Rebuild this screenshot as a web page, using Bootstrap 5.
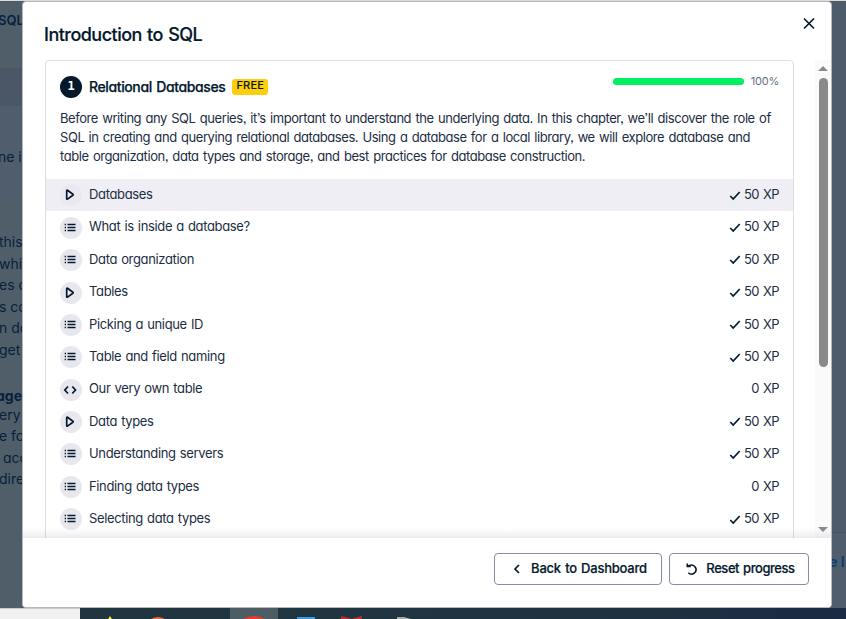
<!DOCTYPE html>
<html lang="en">
<head>
<meta charset="utf-8">
<meta name="viewport" content="width=device-width, initial-scale=1">
<title>Introduction to SQL</title>
<link href="https://cdn.jsdelivr.net/npm/bootstrap@5.3.0/dist/css/bootstrap.min.css" rel="stylesheet">
<style>
  body{height:619px;overflow:hidden;background:#505e6a;color:#05192d;font-family:Inter,"Liberation Sans",sans-serif;font-feature-settings:"cv11","ss03";font-size:13px;line-height:19px}
  svg{display:block;fill:none;stroke:#05192d;stroke-width:1.7}
  /* dimmed page */
  .page{height:608px;border-top:1px solid #d9dad6}
  .page-left{width:30px;font-size:14px;line-height:21.6px;color:#08203a}
  .page-right{width:14px;background:#4d5b6a;color:#0b3c78;font-size:14px}
  .crumb{height:67px;padding-top:9px;margin-left:-2px;font-size:13px}
  .band{height:38px;background:#4b5767}
  .intro{height:90px;padding-top:40px;background:#4f5d6c}
  .intro span{margin-left:-2px}
  .prose{padding-top:35px;white-space:pre;margin-left:-1px}
  .prose b{display:block;margin:25px 0 -2px -3px;line-height:20px}
  .pr-top{height:532px;border-bottom:1px solid #455367}
  .pr-foot{background:#505d6d;padding-top:19px;height:75px}
  .pr-foot span{margin-left:-3px}
  .taskbar{height:11px;background:#203540;overflow:hidden}
  .tb-search{width:80px;background:#f1f1f1;border-top:1px solid #c9cacc}
  .tb-active{width:48px;background:#4c5d65}
  .tb-rest{background:linear-gradient(90deg,#213641,#1e3140 60%,#1b2b43)}
  .taskbar svg{stroke:none}
  /* dialog */
  .dialog{left:22px;top:1px;width:810px;height:607px;background:#fff;border:1px solid #b5b8c2;border-radius:4px;overflow:hidden}
  .dlg-head{height:58px;padding:0 15px 0 21px}
  .dlg-head h1{font-size:18px;line-height:24px;font-weight:500;letter-spacing:-.52px;word-spacing:1px;margin:21px 0 0;-webkit-text-stroke:.2px}
  .x-btn{width:14px;height:14px;margin-top:14px}
  .scroller{height:478px;overflow:hidden;padding-left:22px}
  .chapter{width:749px;height:500px;border:1px solid #dddde4;border-radius:4px}
  .ch-head{height:48px;padding:15px 14px 0}
  .num{width:22px;height:22px;background:#05192d;font:bold 12px "DejaVu Sans Mono",monospace;line-height:21px}
  .ch-title{font-size:14px;line-height:22px;font-weight:500;letter-spacing:-.38px;word-spacing:1px;margin:0 7px;-webkit-text-stroke:.25px}
  .free{height:16px;margin-top:3px;padding:0 4px;background:#fcce0d;border-radius:3px;font-size:11px;font-weight:500;letter-spacing:.2px;line-height:13px;-webkit-text-stroke:.1px}
  .meter{width:131px;height:7px;margin:2px 7px 0 0;background:#03ef62;border-radius:4px}
  .pct{font-size:11px;line-height:10px;color:#65707c;letter-spacing:-.2px}
  .desc{height:70px;padding-left:14px;margin:0;white-space:nowrap;color:#1b2d42;letter-spacing:-.432px;word-spacing:1.05px}
  .desc span{display:block}
  .lesson{height:32.4px;padding:0 14px 1.2px;font-size:13px;color:#1b2d42;letter-spacing:-.35px;word-spacing:.8px}
  .lesson.on{background:#efeef4}
  .ico{width:22px;height:22px;margin:1.500px 7px 0 0;border-radius:50%;background:#e8e7ee}
  .on .ico{background:#eae9f0}
  .lesson svg.tick{width:12px;height:12px;margin:2px 3px 0 0;stroke-width:1.7}
  .xp{letter-spacing:-.62px;word-spacing:1.200px}
  .rail{width:16px;background:#fafafa;padding:6px 0}
  .rail svg{fill:#8a8a8a;stroke:none}
  .thumb{width:9px;height:289px;margin-top:7px;background:#8a8a8a;border-radius:5px}
  .fade-edge{height:10px;margin-top:-10px;position:relative;background:linear-gradient(rgba(5,25,45,0),rgba(5,25,45,.08))}
  .dlg-foot{height:69px;padding:15px 22px 0;gap:7px;background:#fff}
  .act{height:32px;border:1px solid #848ca8;border-radius:4px;padding:0;font-size:13px;font-weight:500;color:#05192d;-webkit-text-stroke:.2px;white-space:nowrap}
  .back{width:168px;gap:8px;padding-left:2px;letter-spacing:-.22px;word-spacing:1px}
  .reset{width:140px;gap:7px;padding-left:2px;letter-spacing:-.45px;word-spacing:1px}
</style>
</head>
<body>
<svg class="d-none">
  <symbol id="play" viewBox="0 0 22 22"><path d="M6.700 6.800v7.800q0 .9.800.5l5.400-3.900q.6-.5 0-1l-5.400-3.900q-.8-.4-.8.5z" stroke-linejoin="round"/></symbol>
  <symbol id="list" viewBox="0 0 22 22"><path d="M7.500 7.500h8M7.500 10.500h8M7.500 13.500h8M4.700 7.500h1.300M4.700 10.500h1.300M4.700 13.500h1.300"/></symbol>
  <symbol id="code" viewBox="0 0 22 22"><path d="M8 7.500L4.800 11 8 14.500M12.300 7.500l3.200 3.500-3.200 3.500"/></symbol>
  <symbol id="tick" viewBox="0 0 12 12"><path d="M1.300 6l2.900 3L10.700 2"/></symbol>
</svg>

<div class="page d-flex justify-content-between">
  <div class="page-left overflow-hidden">
    <div class="crumb fw-semibold">SQL</div>
    <div class="band"></div>
    <div class="intro text-nowrap"><span>ne i</span></div>
    <div class="prose">this
whi
es a
s co
n da
get<b>age</b>ery l
e fo
 acc
dire</div>
  </div>
  <div class="page-right overflow-hidden fw-bold text-nowrap">
    <div class="pr-top"></div>
    <div class="pr-foot"><span>e l</span></div>
  </div>
</div>
<div class="taskbar d-flex">
  <div class="tb-search"></div>
  <svg width="150" height="11"><path d="M28 11l2-3 2 3z" fill="#f6e12c"/><path d="M71 11q7-4 14 0z" fill="#ee6542"/></svg>
  <div class="tb-active"><svg width="48" height="11"><path d="M13 11q11-6 22 0z" fill="#e93b2d"/></svg></div>
  <div class="tb-rest flex-grow-1"><svg width="160" height="11"><path d="M19 9h18v2H19z" fill="#3c9be0"/><path d="M63 8l12 3H63zM84 8l-12 3h12z" fill="#c3282c"/><path d="M119 9h7l7 2h-14z" fill="#a4adad"/></svg></div>
</div>

<div class="dialog position-absolute">
  <div class="dlg-head d-flex justify-content-between">
    <h1>Introduction to SQL</h1>
    <svg class="x-btn" viewBox="0 0 14 14"><path d="M2 2.500l10 10M12 2.500l-10 10"/></svg>
  </div>
  <div class="scroller d-flex justify-content-between">
    <div class="chapter">
      <div class="ch-head d-flex align-items-start">
        <span class="num rounded-circle text-white text-center">1</span>
        <h2 class="ch-title">Relational Databases</h2>
        <span class="free">FREE</span>
        <div class="d-flex ms-auto"><div class="meter"></div><span class="pct">100%</span></div>
      </div>
      <p class="desc"><span>Before writing any SQL queries, it’s important to understand the underlying data. In this chapter, we’ll discover the role of</span><span>SQL in creating and querying relational databases. Using a database for a local library, we will explore database and</span><span>table organization, data types and storage, and best practices for database construction.</span></p>
      <div>
        <div class="lesson on d-flex align-items-center"><svg class="ico"><use href="#play"/></svg>Databases<svg class="tick ms-auto"><use href="#tick"/></svg><span class="xp">50 XP</span></div>
        <div class="lesson d-flex align-items-center"><svg class="ico"><use href="#list"/></svg>What is inside a database?<svg class="tick ms-auto"><use href="#tick"/></svg><span class="xp">50 XP</span></div>
        <div class="lesson d-flex align-items-center"><svg class="ico"><use href="#list"/></svg>Data organization<svg class="tick ms-auto"><use href="#tick"/></svg><span class="xp">50 XP</span></div>
        <div class="lesson d-flex align-items-center"><svg class="ico"><use href="#play"/></svg>Tables<svg class="tick ms-auto"><use href="#tick"/></svg><span class="xp">50 XP</span></div>
        <div class="lesson d-flex align-items-center"><svg class="ico"><use href="#list"/></svg>Picking a unique ID<svg class="tick ms-auto"><use href="#tick"/></svg><span class="xp">50 XP</span></div>
        <div class="lesson d-flex align-items-center"><svg class="ico"><use href="#list"/></svg>Table and field naming<svg class="tick ms-auto"><use href="#tick"/></svg><span class="xp">50 XP</span></div>
        <div class="lesson d-flex align-items-center"><svg class="ico"><use href="#code"/></svg>Our very own table<span class="xp ms-auto">0 XP</span></div>
        <div class="lesson d-flex align-items-center"><svg class="ico"><use href="#play"/></svg>Data types<svg class="tick ms-auto"><use href="#tick"/></svg><span class="xp">50 XP</span></div>
        <div class="lesson d-flex align-items-center"><svg class="ico"><use href="#list"/></svg>Understanding servers<svg class="tick ms-auto"><use href="#tick"/></svg><span class="xp">50 XP</span></div>
        <div class="lesson d-flex align-items-center"><svg class="ico"><use href="#list"/></svg>Finding data types<span class="xp ms-auto">0 XP</span></div>
        <div class="lesson d-flex align-items-center"><svg class="ico"><use href="#list"/></svg>Selecting data types<svg class="tick ms-auto"><use href="#tick"/></svg><span class="xp">50 XP</span></div>
      </div>
    </div>
    <div class="rail d-flex flex-column align-items-center">
      <svg width="10" height="5"><path d="M0 5l5-5 5 5z"/></svg>
      <div class="thumb"></div>
      <svg class="mt-auto" width="10" height="5"><path d="M0 0l5 5 5-5z"/></svg>
    </div>
  </div>
  <div class="fade-edge"></div>
  <div class="dlg-foot d-flex justify-content-end">
    <button class="act back btn d-flex align-items-center justify-content-center"><svg width="12" height="12"><path d="M8 2L4 6l4 4"/></svg>Back to Dashboard</button>
    <button class="act reset btn d-flex align-items-center justify-content-center"><svg width="14" height="14"><path d="M2.300 1.500v3h3.500M2.800 4.300l1.800-.8a4.500 4.500 0 1 1-1.300 7.300" stroke-width="1.600"/></svg>Reset progress</button>
  </div>
</div>
<script src="https://cdn.jsdelivr.net/npm/bootstrap@5.3.0/dist/js/bootstrap.bundle.min.js"></script>
</body>
</html>
